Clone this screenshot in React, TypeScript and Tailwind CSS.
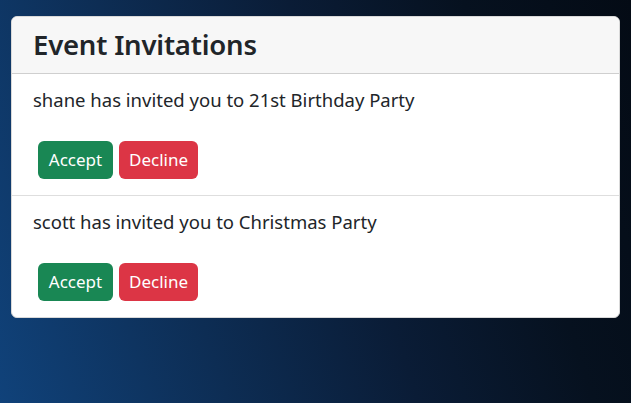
import React from 'react'

const invites = [
  { from: 'shane', event: '21st Birthday Party' },
  { from: 'scott', event: 'Christmas Party' },
]

const App = () => {
  return (
    <div className="w-[631px] h-[403px] overflow-hidden bg-[linear-gradient(72deg,#10427a_0%,#0d2d54_30%,#0a1c36_55%,#06111f_78%,#040b15_100%)] pt-[16px] pl-[11px] pr-[11px] font-['Noto_Sans',sans-serif] text-[#212529]">
      <div className="w-[609px] bg-white rounded-[6px] border border-[#d9d9d9] overflow-hidden">
        <div className="bg-[#f7f7f7] border-b border-[#cfcfcf] h-[57px] pl-[21px] flex items-center">
          <h2 className="text-[27.5px] font-semibold leading-[32px] tracking-[-0.2px]">Event Invitations</h2>
        </div>

        {invites.map((inv, i) => (
          <div
            key={inv.from}
            className={
              i < invites.length - 1
                ? 'border-b border-[#dedede] pl-[21px] pt-[14px] pb-[16px]'
                : 'pl-[21px] pt-[14px] pb-[16px]'
            }
          >
            <p className="text-[18.5px] leading-[24px]">
              {inv.from} has invited you to {inv.event}
            </p>
            <div className="flex gap-[6px] mt-[29px] pl-[5px]">
              <button className="h-[38px] w-[75px] rounded-[6px] bg-[#198754] text-white text-[17px]">Accept</button>
              <button className="h-[38px] w-[79px] rounded-[6px] bg-[#dc3545] text-white text-[17px]">Decline</button>
            </div>
          </div>
        ))}
      </div>
    </div>
  )
}

export default App
